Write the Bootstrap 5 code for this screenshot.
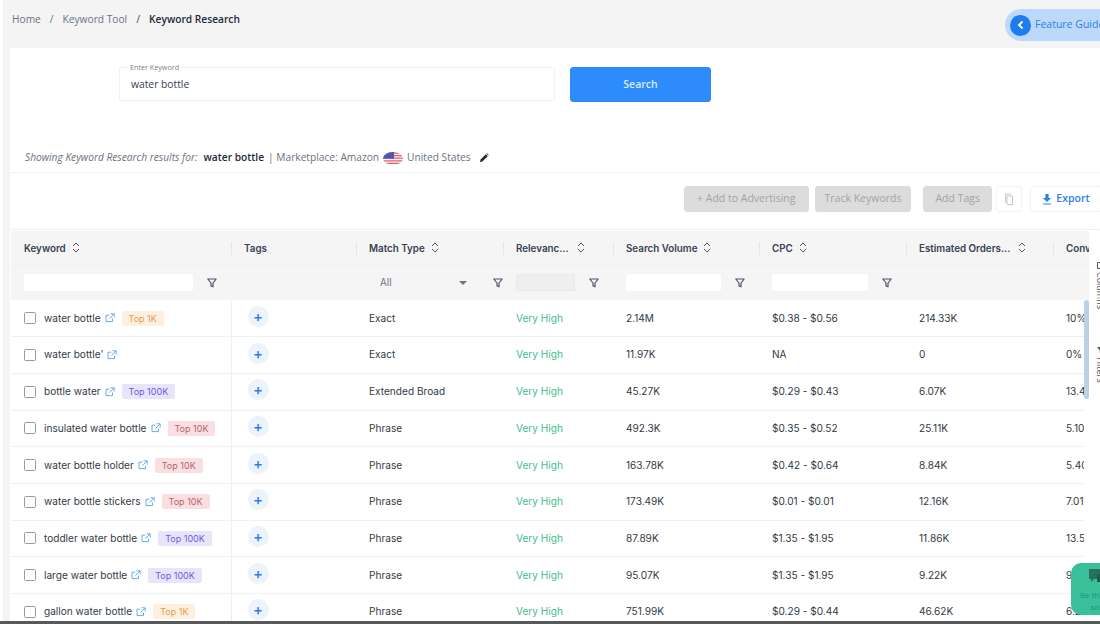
<!DOCTYPE html>
<html lang="en">
<head>
<meta charset="utf-8">
<title>Keyword Research</title>
<link rel="stylesheet" href="https://cdn.jsdelivr.net/npm/bootstrap@5.3.0/dist/css/bootstrap.min.css">
<style>
html,body{height:624px;overflow:hidden;background:#fff}
body{font-family:"Open Sans","Liberation Sans",sans-serif;color:#2f3542;position:relative}
.shell{height:621px;margin-left:3px;background:#f4f4f5;overflow:hidden}
.topbar{height:48px;padding-left:9px;overflow:hidden}
.crumbs{font-size:10.2px;margin:0;padding-bottom:8px;--bs-breadcrumb-divider-color:#6b7280;--bs-breadcrumb-item-padding-x:9px}
.crumbs a{color:#6b7280;text-decoration:none}
.crumbs .active{color:#1f2937;font-weight:600}
.guide{width:112px;height:32px;margin:2px -17px 0 auto;border-radius:16px 0 0 16px;background:#bcd9fb;color:#2f80e8;font-size:10.5px;padding-left:5px;gap:4px;flex:none}
.guide-dot{width:21px;height:21px;border-radius:50%;background:#1f7cf0}
.sheet{margin-left:7px;background:#fff;height:573px;overflow:hidden}
.searchrow{height:95px;padding:19px 0 0 109px}
.kw-box{width:436px;height:35px;position:relative}
.kw-box .form-control{height:34px;font-size:10.3px;color:#374151;border-color:#f0f0f2;border-radius:3px;padding:0 11px;box-shadow:none}
.kw-box label{position:absolute;left:9px;top:-4px;padding:0 2px;background:#fff;font-size:7.2px;line-height:8px;color:#7b8088}
.go{width:141px;height:35px;margin-left:15px;background:#2d8bfb;border-color:#2d8bfb;border-radius:3px;font-size:10.5px;font-weight:600;padding:0;color:#dcebff}
.result-line{height:30px;padding:1px 0 0 15px;font-size:10.2px;color:#6b7280;gap:4px;border-bottom:1px solid #f3f3f4}
.result-line em{margin-right:2px}
.result-line strong{color:#1f2937;font-weight:600}
.tools{height:57px;padding:13px 0 0 0;margin-right:-2px;gap:6px;border-bottom:1px solid #f1f1f2}
.tools .btn{height:26px;font-size:10.5px;padding:0 11px;border-radius:3px;font-weight:400}
.off,.off:disabled{background:#dcdcdc;border-color:#dcdcdc;color:#a3a3a3;opacity:1}
.tools .btn.wideoff{padding:0 12px}
.tools .btn.trackoff{padding:0 9px}
.tools .btn.tagoff{margin-left:6px}
.tools .btn.copybtn,.tools .btn.expbtn{display:flex;align-items:center;justify-content:center;padding:0;background:#fff;border:1px solid #f2f2f2}
.tools .btn.copybtn{width:26px;margin-left:-2px;margin-right:2px}
.tools .btn.expbtn{width:72px;color:#2f80e8;font-weight:600;gap:4px}
.gridwrap{margin-top:1px;margin-left:1px;height:400px;position:relative}
.gridclip{width:1078px;overflow:hidden;flex:none}
.kgrid{table-layout:fixed;width:1130px;margin:0;font-family:Inter,"Liberation Sans",sans-serif;font-size:10.1px;--bs-table-color:#333a45;--bs-table-border-color:#f0f1f2}
.kgrid td,.kgrid th{padding:0 0 0 13px;vertical-align:middle;white-space:nowrap;overflow:hidden}
.kgrid tbody td{height:36.7px;border-bottom:1px solid #f0f1f2}
.kgrid thead th{background:#f5f5f6;border:0;--bs-table-bg:#f5f5f6;position:relative;color:#374151;font-weight:600;font-size:9.8px}
.kgrid .headrow th{height:34px;padding-top:4px;border-bottom:1px solid #f0f0f1!important}
.filtrow th{height:35px;font-weight:400!important}
.sep::before{content:"";position:absolute;left:0;top:11px;height:13px;border-left:1px solid #e4e4e6}
.divider{border-right:1px solid #eeeff1!important}
.sorticon{margin-left:6px;vertical-align:-1px}
.fbox{height:17px;border:0;background:#fff;padding:0;border-radius:2px;flex:none}
.fbox:disabled{background:#efeff0;border:1px solid #e9e9ea}
.fcell{gap:14px}
.allpick{font-weight:400;color:#6b7280;width:98px;padding:1px 0 0 11px}
.caret-d{width:0;height:0;border:4px solid transparent;border-top-color:#6b7280;border-bottom:0}
.matchfilter{margin-left:26px}
.kgrid .tick[type=checkbox]{width:12px;height:12px;border:1px solid #9a9a9a;border-radius:1.5px;margin:0 8px 0 0;background:#fff;flex:none}
.ext{margin:0 7px 0 4px;flex:none}
.rank{font-size:9px;line-height:15px;padding:0 7px;border-radius:2px;font-weight:400}
.rank-1k{background:#fdf0e0;color:#ec9a4b}
.rank-10k{background:#fadfe2;color:#b8626c}
.rank-100k{background:#e8e5fb;color:#6a5ae0}
.addtag{width:21px;height:21px;border-radius:50%;background:#edf3fa;color:#2f80e8;border:0;padding:0;font-size:15px;line-height:19px;margin:-4px 0 0 3px;font-weight:500}
.vhigh{color:#3fc08c!important}
.sidepanel{flex:1;background:#fff;overflow:hidden;position:relative;margin-left:0}
.vtab{position:absolute;left:5px;writing-mode:vertical-rl;font-size:9px;color:#4b5563;line-height:12px;display:flex;align-items:center;gap:3px}
.track{position:absolute;left:1073px;top:69px;bottom:0;width:5px;background:#fff}
.thumb{height:99px;background:#bcd0e6;border-radius:3px}
.helper{position:absolute;left:1071px;top:563px;width:60px;height:52px;background:#3abf9b;border-radius:10px;color:#1f9478;font-size:8px;line-height:12px;padding-top:6px;text-align:center;white-space:nowrap}
.helper svg{display:block;margin:0 auto 4px}
.bottomline{height:3px;background:#58595b}
</style>
</head>
<body>
<svg width="0" height="0" class="position-absolute">
  <symbol id="i-sort" viewBox="0 0 8 11"><path d="M1 4 4 1l3 3M1 7l3 3 3-3" fill="none" stroke="#4b5563" stroke-width="1"/></symbol>
  <symbol id="i-filter" viewBox="0 0 10 10"><path d="M.8 1h8.4L6 5v3.8L4 8V5z" fill="none" stroke="#4b5563" stroke-width="1.2" stroke-linejoin="round"/></symbol>
  <symbol id="i-ext" viewBox="0 0 10 10"><path d="M7.5 5.6v3H1V2.2h3.2M5.5.8h3.7v3.7M9 1 4.5 5.5" fill="none" stroke="#5aa2e8" stroke-width=".9"/></symbol>
</svg>
<div class="shell">
  <div class="topbar d-flex align-items-center">
    <nav aria-label="breadcrumb">
      <ol class="breadcrumb crumbs">
        <li class="breadcrumb-item"><a href="#">Home</a></li>
        <li class="breadcrumb-item"><a href="#">Keyword Tool</a></li>
        <li class="breadcrumb-item active" aria-current="page">Keyword Research</li>
      </ol>
    </nav>
    <div class="guide d-flex align-items-center">
      <span class="guide-dot d-flex align-items-center justify-content-center"><svg width="8" height="10" viewBox="0 0 8 10"><path d="M5.5 1.5 2 5l3.5 3.5" fill="none" stroke="#fff" stroke-width="1.8"/></svg></span>
      <span class="text-nowrap">Feature Guide</span>
    </div>
  </div>
  <div class="sheet">
    <div class="searchrow d-flex align-items-start">
      <div class="kw-box">
        <label for="kw">Enter Keyword</label>
        <input id="kw" class="form-control" type="text" value="water bottle">
      </div>
      <button class="btn btn-primary go" type="button">Search</button>
    </div>
    <div class="result-line d-flex align-items-center">
      <em>Showing Keyword Research results for:</em>
      <strong>water bottle</strong>
      <span>| Marketplace: Amazon</span>
      <svg width="20" height="13" viewBox="0 0 20 13"><defs><clipPath id="fl"><ellipse cx="10" cy="6.5" rx="10" ry="6.5"/></clipPath></defs><g clip-path="url(#fl)"><rect width="20" height="13" fill="#f4f4f8"/><path d="M0 1h20M0 3.6h20M0 6.2h20M0 8.8h20M0 11.4h20" stroke="#e0606a" stroke-width="1.3"/><rect width="11" height="6.6" fill="#4a55b5"/></g></svg>
      <span>United States</span>
      <svg class="ms-1" width="10" height="10" viewBox="0 0 10 10"><path d="M1 9l.5-2.4L6.8 1.3l1.9 1.9-5.3 5.3zM7.4.8l.7-.5 1.6 1.6-.5.7z" fill="#1f2937"/></svg>
    </div>
    <div class="tools d-flex justify-content-end align-items-start">
      <button class="btn off wideoff" disabled type="button">+ Add to Advertising</button>
      <button class="btn off trackoff" disabled type="button">Track Keywords</button>
      <button class="btn off tagoff" disabled type="button">Add Tags</button>
      <button class="btn copybtn" type="button" aria-label="Copy"><svg width="10" height="13" viewBox="0 0 10 13"><path d="M7 1H1.6v9M3 3h5.5v8.5H3z" fill="none" stroke="#c4c6c9" stroke-width="1"/></svg></button>
      <button class="btn expbtn" type="button"><svg width="10" height="11" viewBox="0 0 10 11"><path d="M3.4 0h3.2v4h2.6L5 8 .8 4h2.6zM1 9.4h8v1.2H1z" fill="#2f80e8"/></svg>Export</button>
    </div>
    <div class="gridwrap d-flex">
      <div class="gridclip">
        <table class="table kgrid">
          <colgroup><col style="width:220px"><col style="width:125px"><col style="width:147px"><col style="width:110px"><col style="width:146px"><col style="width:147px"><col style="width:147px"><col style="width:88px"></colgroup>
          <thead>
            <tr class="headrow">
              <th>Keyword<svg class="sorticon" width="8" height="11"><use href="#i-sort"/></svg></th>
              <th class="sep">Tags</th>
              <th class="sep">Match Type<svg class="sorticon" width="8" height="11"><use href="#i-sort"/></svg></th>
              <th class="sep">Relevanc...<svg class="sorticon ms-2" width="8" height="11"><use href="#i-sort"/></svg></th>
              <th class="sep">Search Volume<svg class="sorticon" width="8" height="11"><use href="#i-sort"/></svg></th>
              <th class="sep">CPC<svg class="sorticon" width="8" height="11"><use href="#i-sort"/></svg></th>
              <th class="sep">Estimated Orders...<svg class="sorticon ms-2" width="8" height="11"><use href="#i-sort"/></svg></th>
              <th class="sep">Conversion</th>
            </tr>
            <tr class="filtrow">
              <th><div class="d-flex align-items-center fcell"><input class="fbox" style="width:169px" aria-label="Keyword filter"><svg width="10" height="10"><use href="#i-filter"/></svg></div></th>
              <th></th>
              <th><div class="d-flex align-items-center"><div class="allpick d-flex justify-content-between align-items-center"><span>All</span><span class="caret-d"></span></div><svg class="matchfilter" width="10" height="10"><use href="#i-filter"/></svg></div></th>
              <th><div class="d-flex align-items-center fcell"><input class="fbox" style="width:59px" disabled aria-label="Relevancy filter"><svg width="10" height="10"><use href="#i-filter"/></svg></div></th>
              <th><div class="d-flex align-items-center fcell"><input class="fbox" style="width:95px" aria-label="Volume filter"><svg width="10" height="10"><use href="#i-filter"/></svg></div></th>
              <th><div class="d-flex align-items-center fcell"><input class="fbox" style="width:96px" aria-label="CPC filter"><svg width="10" height="10"><use href="#i-filter"/></svg></div></th>
              <th></th>
              <th></th>
            </tr>
          </thead>
          <tbody>
            <tr><td class="divider"><div class="d-flex align-items-center"><input type="checkbox" class="tick form-check-input" aria-label="Select">water bottle<svg class="ext" width="10" height="10"><use href="#i-ext"/></svg><span class="rank rank-1k">Top 1K</span></div></td><td><button class="addtag" type="button">+</button></td><td>Exact</td><td class="vhigh">Very High</td><td>2.14M</td><td>$0.38 - $0.56</td><td>214.33K</td><td>10%</td></tr>
            <tr><td class="divider"><div class="d-flex align-items-center"><input type="checkbox" class="tick form-check-input" aria-label="Select">water bottle'<svg class="ext" width="10" height="10"><use href="#i-ext"/></svg></div></td><td><button class="addtag" type="button">+</button></td><td>Exact</td><td class="vhigh">Very High</td><td>11.97K</td><td>NA</td><td>0</td><td>0%</td></tr>
            <tr><td class="divider"><div class="d-flex align-items-center"><input type="checkbox" class="tick form-check-input" aria-label="Select">bottle water<svg class="ext" width="10" height="10"><use href="#i-ext"/></svg><span class="rank rank-100k">Top 100K</span></div></td><td><button class="addtag" type="button">+</button></td><td>Extended Broad</td><td class="vhigh">Very High</td><td>45.27K</td><td>$0.29 - $0.43</td><td>6.07K</td><td>13.4%</td></tr>
            <tr><td class="divider"><div class="d-flex align-items-center"><input type="checkbox" class="tick form-check-input" aria-label="Select">insulated water bottle<svg class="ext" width="10" height="10"><use href="#i-ext"/></svg><span class="rank rank-10k">Top 10K</span></div></td><td><button class="addtag" type="button">+</button></td><td>Phrase</td><td class="vhigh">Very High</td><td>492.3K</td><td>$0.35 - $0.52</td><td>25.11K</td><td>5.10%</td></tr>
            <tr><td class="divider"><div class="d-flex align-items-center"><input type="checkbox" class="tick form-check-input" aria-label="Select">water bottle holder<svg class="ext" width="10" height="10"><use href="#i-ext"/></svg><span class="rank rank-10k">Top 10K</span></div></td><td><button class="addtag" type="button">+</button></td><td>Phrase</td><td class="vhigh">Very High</td><td>163.78K</td><td>$0.42 - $0.64</td><td>8.84K</td><td>5.40%</td></tr>
            <tr><td class="divider"><div class="d-flex align-items-center"><input type="checkbox" class="tick form-check-input" aria-label="Select">water bottle stickers<svg class="ext" width="10" height="10"><use href="#i-ext"/></svg><span class="rank rank-10k">Top 10K</span></div></td><td><button class="addtag" type="button">+</button></td><td>Phrase</td><td class="vhigh">Very High</td><td>173.49K</td><td>$0.01 - $0.01</td><td>12.16K</td><td>7.01%</td></tr>
            <tr><td class="divider"><div class="d-flex align-items-center"><input type="checkbox" class="tick form-check-input" aria-label="Select">toddler water bottle<svg class="ext" width="10" height="10"><use href="#i-ext"/></svg><span class="rank rank-100k">Top 100K</span></div></td><td><button class="addtag" type="button">+</button></td><td>Phrase</td><td class="vhigh">Very High</td><td>87.89K</td><td>$1.35 - $1.95</td><td>11.86K</td><td>13.5%</td></tr>
            <tr><td class="divider"><div class="d-flex align-items-center"><input type="checkbox" class="tick form-check-input" aria-label="Select">large water bottle<svg class="ext" width="10" height="10"><use href="#i-ext"/></svg><span class="rank rank-100k">Top 100K</span></div></td><td><button class="addtag" type="button">+</button></td><td>Phrase</td><td class="vhigh">Very High</td><td>95.07K</td><td>$1.35 - $1.95</td><td>9.22K</td><td>9.8%</td></tr>
            <tr><td class="divider"><div class="d-flex align-items-center"><input type="checkbox" class="tick form-check-input" aria-label="Select">gallon water bottle<svg class="ext" width="10" height="10"><use href="#i-ext"/></svg><span class="rank rank-1k">Top 1K</span></div></td><td><button class="addtag" type="button">+</button></td><td>Phrase</td><td class="vhigh">Very High</td><td>751.99K</td><td>$0.29 - $0.44</td><td>46.62K</td><td>6.2%</td></tr>
          </tbody>
        </table>
      </div>
      <div class="track"><div class="thumb"></div></div>
      <div class="sidepanel">
        <span class="vtab" style="top:31px"><svg width="7" height="7" viewBox="0 0 7 7"><path d="M.5.5h6v6h-6zM3.5.5v6" fill="none" stroke="#4b5563"/></svg>Columns</span>
        <span class="vtab" style="top:116px"><svg width="7" height="7" viewBox="0 0 7 7"><path d="M0 0h7L4.2 3.5V7L2.8 6V3.5z" fill="#4b5563"/></svg>Filters</span>
      </div>
    </div>
  </div>
</div>
<div class="bottomline"></div>
<div class="helper">
  <svg width="24" height="16" viewBox="0 0 24 16"><path d="M0 0h15v10H5L2 13v-3H0z" fill="#2a6f5e"/><path d="M8 5h16v8h-2v3l-3-3H8z" fill="#1f5a4b"/></svg>
  <div>Be the best</div><div>social</div>
</div>
</body>
</html>
